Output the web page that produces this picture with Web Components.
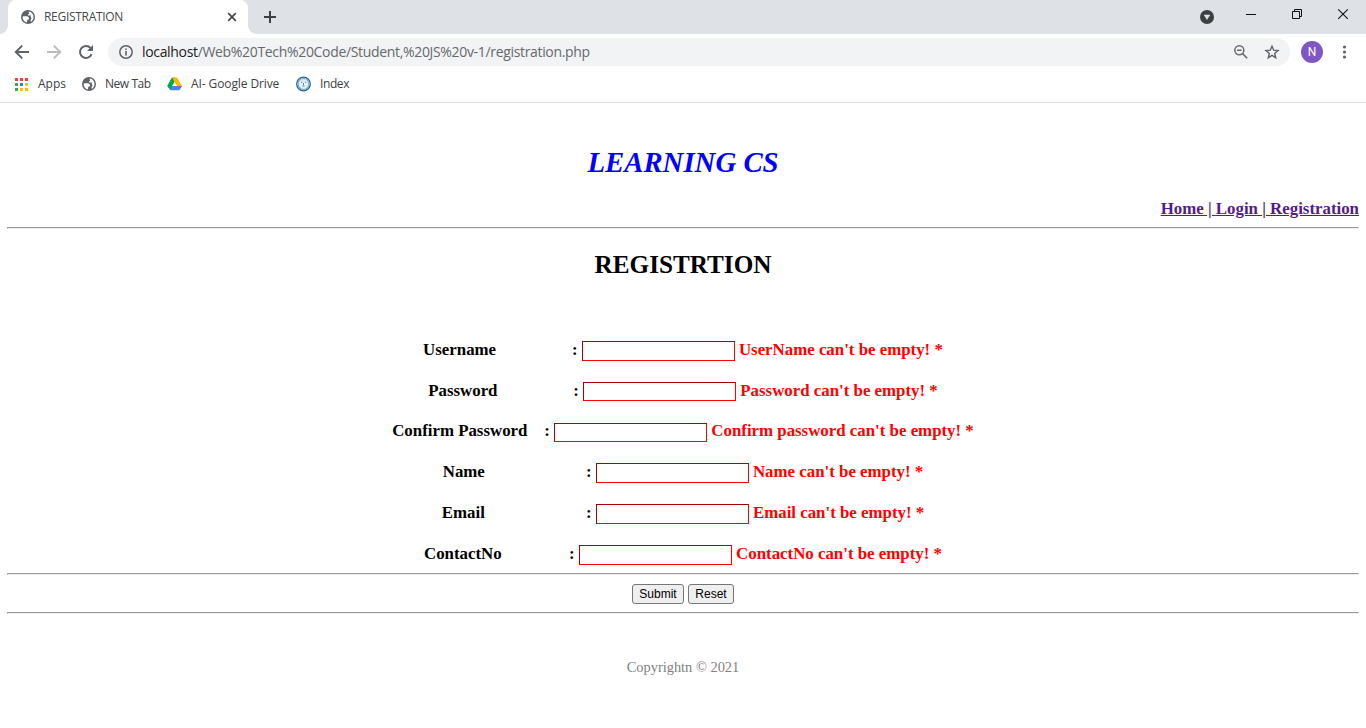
<!DOCTYPE html>
<html lang="en">
<head>
<meta charset="utf-8">
<title>REGISTRATION</title>
<style>
html,body{margin:0;height:100%;background:#fff;overflow:hidden}
</style>
</head>
<body>
<browser-window></browser-window>
<script>
const define=(name,html)=>customElements.define(name,class extends HTMLElement{
  constructor(){
    super();
    const t=document.createElement('template');
    t.innerHTML=html;
    this.attachShadow({mode:'open'}).append(t.content.cloneNode(true));
  }
});

define('globe-icon',`<style>:host{display:block;width:14px;height:14px}svg{display:block}</style>
<svg width="14" height="14" viewBox="0 0 14 14"><circle cx="7" cy="7" r="7" fill="#5f6368"/><path d="M2 6.3H6.4L8.2 8 7.6 9.4 6.2 9.8 6 12.4C3.6 12 1.7 9.8 1.6 7.4z" fill="#fff"/><path d="M7.6 1.6C10.4 1.9 12.5 4.2 12.5 7 12.5 9.2 11.4 11 9.8 11.9L9.6 10 10.6 8.2 9.6 6.8 10.2 5.4 7.2 5.5 6.9 4.6 8.2 3.8z" fill="#fff"/></svg>`);

define('tab-strip',`<style>
:host{display:flex;height:34px;background:#dee1e6;font-family:"Open Sans","Noto Sans",sans-serif;box-sizing:border-box;padding-left:8px}
.tab{position:relative;width:240px;box-sizing:border-box;background:#fff;border-radius:8px 8px 0 0;display:flex;align-items:center;padding:0 11px 0 13px}
.tab:before,.tab:after{content:"";position:absolute;bottom:0;width:8px;height:8px}
.tab:before{left:-8px;background:radial-gradient(circle at 0 0,#dee1e6 7.5px,#fff 8px)}
.tab:after{right:-8px;background:radial-gradient(circle at 100% 0,#dee1e6 7.5px,#fff 8px)}
.name{font-size:12px;letter-spacing:-.3px;color:#45494d;margin-left:9px;flex:1;line-height:16px;white-space:nowrap}
svg{display:block;flex:none}
.plus{margin:11px 0 0 16px}
.controls{margin-left:auto;display:flex;padding-right:16px}
</style>
<div class="tab"><globe-icon></globe-icon><span class="name">REGISTRATION</span>
<svg width="10" height="10" viewBox="0 0 10 10"><path d="M1.2 1.2l7.6 7.6M8.8 1.2L1.2 8.8" stroke="#45494d" stroke-width="1.7"/></svg></div>
<svg class="plus" width="12" height="12" viewBox="0 0 12 12"><path d="M6 0v12M0 6h12" stroke="#3c4043" stroke-width="2"/></svg>
<div class="controls">
<svg width="14" height="34" viewBox="0 0 14 34"><circle cx="7" cy="17" r="7" fill="#3c4043"/><path d="M4.2 15h5.6L7 19.5z" fill="#dee1e6" stroke="#dee1e6" stroke-width=".6"/></svg>
<svg width="42" height="34" viewBox="0 0 42 34"><path d="M32 14.5h10" stroke="#111"/></svg>
<svg width="46" height="34" viewBox="0 0 46 34"><path d="M36.5 11.5h7v7h-7zM38.5 11.5v-2h7v7h-2" fill="none" stroke="#111"/></svg>
<svg width="48" height="34" viewBox="0 0 48 34"><path d="M36.2 9.3l9.6 9.6M45.8 9.3l-9.6 9.6" stroke="#111" stroke-width="1.1"/></svg>
</div>`);

define('nav-toolbar',`<style>
:host{display:flex;align-items:center;height:36px;box-sizing:border-box;padding:0 11px 0 14px;background:#fff;font-family:"Open Sans","Noto Sans",sans-serif}
svg{display:block;flex:none}
.nav{display:flex;gap:16px}
.url{flex:1;height:28px;border-radius:14px;background:#f1f3f4;display:flex;align-items:center;margin:0 11px 0 14px;padding:0 10px 0 11px}
.text{font-size:14px;letter-spacing:-.33px;line-height:20px;color:#66696d;white-space:nowrap;flex:1;margin-left:9px}
.text b{font-weight:400;color:#202124}
.star{margin-left:16px}
.avatar{width:22px;height:22px;border-radius:50%;background:#7e57c2;color:#fff;font:12px/22px Roboto,sans-serif;text-align:center}
.more{margin-left:14px;margin-right:2px}
</style>
<div class="nav">
<svg width="16" height="16" viewBox="0 0 16 16"><path d="M15 8H2.2M8.2 1.6L1.8 8l6.4 6.4" fill="none" stroke="#5f6368" stroke-width="2"/></svg>
<svg width="16" height="16" viewBox="0 0 16 16"><path d="M1 8h12.8M7.8 1.6L14.2 8l-6.4 6.4" fill="none" stroke="#babcbe" stroke-width="2"/></svg>
<svg width="16" height="16" viewBox="0 0 16 16"><path d="M13.6 10.2A6 6 0 1 1 12.5 4" fill="none" stroke="#5f6368" stroke-width="2"/><path d="M15 1v6H9z" fill="#5f6368"/></svg>
</div>
<div class="url">
<svg width="14" height="14" viewBox="0 0 14 14"><circle cx="7" cy="7" r="6.2" fill="none" stroke="#5f6368" stroke-width="1.5"/><path d="M7 6v4.5M7 3.4v1.5" stroke="#5f6368" stroke-width="1.6"/></svg>
<div class="text"><b>localhost</b>/Web%20Tech%20Code/Student,%20JS%20v-1/registration.php</div>
<svg width="14" height="14" viewBox="0 0 14 14"><circle cx="5.3" cy="5.3" r="4.5" fill="none" stroke="#66696d" stroke-width="1.5"/><path d="M3 5.3h4.6M8.6 8.6l4.6 4.6" stroke="#66696d" stroke-width="1.5"/></svg>
<svg class="star" width="16" height="16" viewBox="0 0 16 16"><path d="M8 2.2l1.7 4 4.3.4-3.3 2.8 1 4.3L8 11.4l-3.7 2.3 1-4.3L2 6.6l4.3-.4z" fill="none" stroke="#5f6368" stroke-width="1.4"/></svg>
</div>
<div class="avatar">N</div>
<svg class="more" width="16" height="16" viewBox="0 0 16 16"><g fill="#5f6368"><circle cx="7.5" cy="3" r="1.6"/><circle cx="7.5" cy="8" r="1.6"/><circle cx="7.5" cy="13" r="1.6"/></g></svg>`);

define('bookmark-item',`<style>
:host{display:flex;align-items:center;font-size:12px;line-height:16px;color:#3c4043;white-space:nowrap}
.label{margin-left:9px}
</style><slot name="icon"></slot><span class="label"><slot></slot></span>`);

define('bookmark-bar',`<style>
:host{display:flex;height:33px;box-sizing:border-box;padding:0 0 4px 15px;border-bottom:1px solid #dadce0;background:#fff;font-family:"Open Sans","Noto Sans",sans-serif}
svg{display:block}
.a{width:67px}.b{width:85px;letter-spacing:-.45px}.c{width:129px;letter-spacing:-.1px}.d{letter-spacing:-.4px}
</style>
<bookmark-item class="a"><svg slot="icon" width="14" height="13" viewBox="0 0 14 13"><path fill="#ea4335" d="M0 0h3v3H0zM5 0h3v3H5zM10 0h3v3h-3z"/><path fill="#34a853" d="M0 5h3v3H0zM0 10h3v3H0z"/><path fill="#1a84ff" d="M5 5h3v3H5z"/><path fill="#fbbc04" d="M10 5h3v3h-3zM5 10h3v3H5zM10 10h3v3h-3z"/></svg>Apps</bookmark-item>
<bookmark-item class="b"><globe-icon slot="icon"></globe-icon>New Tab</bookmark-item>
<bookmark-item class="c"><svg slot="icon" width="15" height="14" viewBox="0 0 15 14"><path fill="#00a650" d="M5 .5h2.6L10 4.6 3.2 13 .2 9z"/><path fill="#ffba00" d="M5 .5h5L14.8 9H9.8z"/><path fill="#4285f4" d="M4.8 9h10l-2.4 4.2H2.8z"/><path fill="#fff" d="M7.5 4.8L9.9 9H5.1z"/><path fill="#ea4335" d="M11.9 9h2.9l-1.5 2.5z"/></svg>AI- Google Drive</bookmark-item>
<bookmark-item class="d"><svg slot="icon" width="15" height="16" viewBox="0 0 15 16"><circle cx="7.5" cy="8" r="6.8" fill="#d2e8f2" stroke="#2b6594" stroke-width="1.3"/><circle cx="7.5" cy="8" r="5.5" fill="none" stroke="#7bb0d6" stroke-width="1.2"/><path d="M4.2 4.5L7.5 5.8l3.3-1.3.4 4.2-3.7 4.2-3.7-4.2z" fill="#edf6f4"/><path d="M5 6.3h1.4M9 6.3h1.4M7.5 7v2M6.4 10h2.2" stroke="#587e93"/></svg>Index</bookmark-item>`);

define('rule-line',`<style>:host{display:block;height:2px;box-sizing:border-box;border:1px solid;border-color:#9a9a9a #eee #eee #9a9a9a}</style>`);

define('site-header',`<style>
:host{display:block}
h1{margin:0;padding-top:43px;font-size:28.8px;line-height:33px;font-style:italic;color:#00f;text-align:center}
nav{margin-top:20px;height:28px;text-align:right;font-size:16.85px;line-height:20px;font-weight:700}
a{color:#551a8b;text-decoration:underline}
</style>
<h1>LEARNING CS</h1>
<nav><a>Home | </a><a>Login | </a><a>Registration</a></nav>
<rule-line></rule-line>`);

define('form-row',`<style>
:host{display:block;height:40.8px;line-height:20px;font-size:16.85px;font-weight:700;text-align:center;white-space:pre}
input{width:153px;height:19.6px;box-sizing:border-box;margin:0;padding:1px;border:1px inset #f00;background:#fff;font:12px "Liberation Sans",Arial,sans-serif;vertical-align:baseline;outline:0}
.err{color:#f00}
</style><span><slot></slot></span><span class="gap"></span>: <input> <span class="err"><slot name="error"></slot></span>`);

define('registration-form',`<style>
:host{display:block}
h2{margin:0;padding-top:21px;font-size:25.2px;line-height:30px;text-align:center}
.rows{box-sizing:border-box;padding-top:59.8px;height:293px}
.buttons{display:flex;justify-content:center;gap:4px;height:37px;padding-top:9px;box-sizing:border-box}
button{height:20px;box-sizing:border-box;border:1px solid #767676;border-radius:3px;background:#efefef;color:#000;font:12px/16px "Liberation Sans",Arial,sans-serif;padding:0;margin:0}
.s{width:52px}.r{width:46px}
</style>
<h2>REGISTRTION</h2>
<div class="rows"></div>
<rule-line></rule-line>
<div class="buttons"><button class="s">Submit</button><button class="r">Reset</button></div>
<rule-line></rule-line>`);

customElements.define('registration-page',class extends HTMLElement{
  constructor(){
    super();
    const root=this.attachShadow({mode:'open'});
    root.innerHTML=`<style>
:host{display:block;padding:0 7px;font-family:"Liberation Serif","Times New Roman",serif;color:#000}
footer{padding-top:44px;font-size:14.4px;line-height:18px;text-align:center;color:#808080}
</style><site-header></site-header><registration-form></registration-form><footer>Copyrightn © 2021</footer>`;
    const rows=root.querySelector('registration-form').shadowRoot.querySelector('.rows');
    for(const [label,gap,error] of [
      ['Username',18,'UserName'],['Password',18,'Password'],['Confirm Password',4,'Confirm password'],
      ['Name',24,'Name'],['Email',24,'Email'],['ContactNo',16,'ContactNo']]){
      const row=document.createElement('form-row');
      row.innerHTML=`${label}<span slot="error">${error} can't be empty! *</span>`;
      row.shadowRoot.querySelector('.gap').textContent='\u00a0'.repeat(gap);
      rows.append(row);
    }
  }
});

define('browser-window',`<style>:host{display:flex;flex-direction:column;width:1366px;height:728px}</style>
<tab-strip></tab-strip><nav-toolbar></nav-toolbar><bookmark-bar></bookmark-bar><registration-page></registration-page>`);
</script>
</body>
</html>
